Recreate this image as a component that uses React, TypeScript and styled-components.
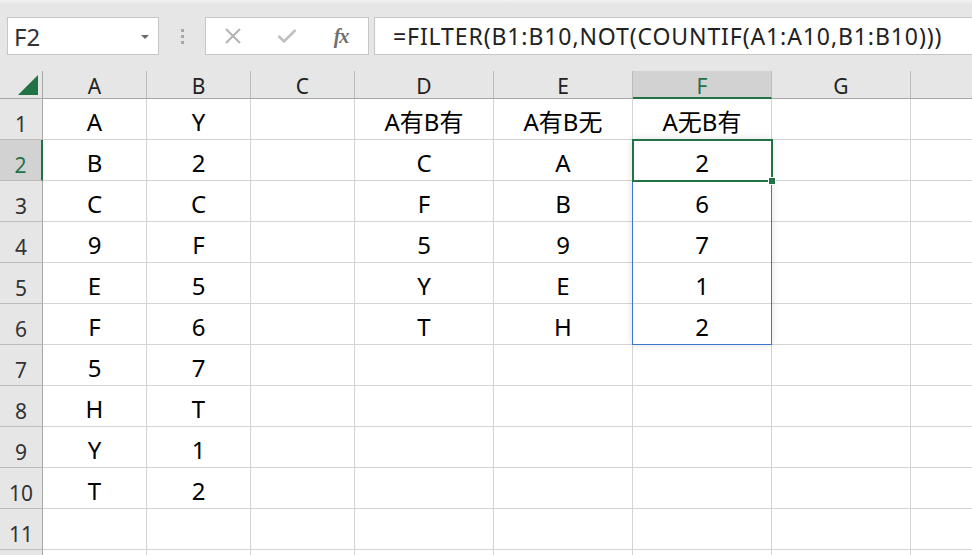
import styled, { createGlobalStyle } from "styled-components";
import { Fragment } from "react";

const GlobalStyle = createGlobalStyle`
  body {
    margin: 0;
    background: #ffffff;
    font-family: "Noto Sans", "Noto Sans CJK SC", sans-serif;
  }
`;

interface ColDef {
  key: string;
  width: number;
}

const COLS: ColDef[] = [
  { key: "A", width: 104 },
  { key: "B", width: 104 },
  { key: "C", width: 104 },
  { key: "D", width: 139 },
  { key: "E", width: 139 },
  { key: "F", width: 139 },
  { key: "G", width: 139 },
  { key: "H", width: 139 },
];

const DATA: string[][] = [
  ["A", "Y", "", "A有B有", "A有B无", "A无B有"],
  ["B", "2", "", "C", "A", "2"],
  ["C", "C", "", "F", "B", "6"],
  ["9", "F", "", "5", "9", "7"],
  ["E", "5", "", "Y", "E", "1"],
  ["F", "6", "", "T", "H", "2"],
  ["5", "7"],
  ["H", "T"],
  ["Y", "1"],
  ["T", "2"],
  [],
  [],
];

const ROW_H = 41;
const HEAD_H = 28;
const ROWHEAD_W = 43;
const F_LEFT = ROWHEAD_W + 104 * 3 + 139 * 2;

const Page = styled.div`
  width: 972px;
  height: 555px;
  overflow: hidden;
  background: #e6e6e6;
  display: flex;
  flex-direction: column;
`;

const Toolbar = styled.div`
  flex-shrink: 0;
  height: 71px;
  box-sizing: border-box;
  padding: 17px 0 16px 7px;
  display: flex;
  align-items: stretch;
  background: linear-gradient(#f3f3f3 0px, #e6e6e6 4px);
`;

const FieldBox = styled.div<{ $w: number }>`
  width: ${(p) => p.$w}px;
  box-sizing: border-box;
  background: #ffffff;
  border: 1px solid #c6c6c6;
  display: flex;
  align-items: center;
  position: relative;
`;

const NameText = styled.span`
  font-family: "Noto Sans", sans-serif;
  font-size: 24px;
  color: #333333;
  padding-left: 6px;
`;

const DropArrow = styled.div`
  position: absolute;
  right: 9px;
  top: 17px;
  width: 0;
  height: 0;
  border-left: 4px solid transparent;
  border-right: 4px solid transparent;
  border-top: 4px solid #6a6a6a;
`;

const Grip = styled.div`
  width: 46px;
  display: flex;
  flex-direction: column;
  align-items: center;
  justify-content: center;
  gap: 3px;
`;

const GripDot = styled.span`
  width: 3px;
  height: 3px;
  background: #a8a8a8;
`;

const IconCell = styled.div`
  flex: 1;
  display: flex;
  align-items: center;
  justify-content: center;
`;

const FxText = styled.span`
  font-family: "Liberation Serif", serif;
  font-style: italic;
  font-weight: bold;
  font-size: 20px;
  color: #6f6f6f;
  letter-spacing: -1px;
`;

const FormulaBox = styled.div`
  flex: 1;
  margin-left: 5px;
  box-sizing: border-box;
  background: #ffffff;
  border: 1px solid #c6c6c6;
  border-right: none;
  display: flex;
  align-items: center;
  padding-left: 18px;
`;

const FormulaText = styled.span`
  font-family: "Noto Sans", sans-serif;
  font-size: 23px;
  letter-spacing: 0.9px;
  color: #222222;
  white-space: nowrap;
`;

const Sheet = styled.div`
  position: relative;
  flex: 1;
  min-height: 0;
  overflow: hidden;
  background: #ffffff;
  display: grid;
  grid-template-columns: ${ROWHEAD_W}px ${COLS.map((c) => `${c.width}px`).join(" ")};
  grid-template-rows: ${HEAD_H}px;
  grid-auto-rows: ${ROW_H}px;
  align-content: start;
`;

const Corner = styled.div`
  background: #e6e6e6;
  box-sizing: border-box;
  border-right: 1px solid #a6a6a6;
  border-bottom: 1px solid #a6a6a6;
  position: relative;
`;

const CornerTriangle = styled.div`
  position: absolute;
  right: 4px;
  bottom: 3px;
  width: 0;
  height: 0;
  border-left: 20px solid transparent;
  border-bottom: 20px solid #217346;
`;

const ColHead = styled.div<{ $active?: boolean }>`
  box-sizing: border-box;
  background: ${(p) => (p.$active ? "#d2d2d2" : "#e6e6e6")};
  border-right: 1px solid #bcbcbc;
  border-bottom: ${(p) => (p.$active ? "2px solid #217346" : "1px solid #a6a6a6")};
  display: flex;
  align-items: center;
  justify-content: center;
  font-size: 21px;
  color: ${(p) => (p.$active ? "#217346" : "#222222")};
  padding-top: ${(p) => (p.$active ? "3px" : "2px")};
`;

const RowHead = styled.div<{ $active?: boolean }>`
  box-sizing: border-box;
  background: ${(p) => (p.$active ? "#d2d2d2" : "#e6e6e6")};
  border-right: ${(p) => (p.$active ? "2px solid #217346" : "1px solid #a6a6a6")};
  border-bottom: 1px solid #bcbcbc;
  display: flex;
  align-items: flex-end;
  justify-content: center;
  padding-bottom: 1px;
  font-size: 21px;
  color: ${(p) => (p.$active ? "#217346" : "#333333")};
`;

const Cell = styled.div`
  box-sizing: border-box;
  border-right: 1px solid #d4d4d4;
  border-bottom: 1px solid #d4d4d4;
  display: flex;
  align-items: flex-end;
  justify-content: center;
  font-size: 24px;
  line-height: 32px;
  padding-bottom: 1px;
  color: #000000;
  white-space: nowrap;
  overflow: hidden;
`;

const SpillRange = styled.div`
  position: absolute;
  left: ${F_LEFT - 1}px;
  top: ${HEAD_H + ROW_H - 1}px;
  width: 140px;
  height: ${ROW_H * 5 + 1}px;
  box-sizing: border-box;
  border: 1px solid #3e74c9;
  box-shadow: 0 0 8px rgba(0, 0, 0, 0.12);
  pointer-events: none;
`;

const ActiveCell = styled.div`
  position: absolute;
  left: ${F_LEFT - 1}px;
  top: ${HEAD_H + ROW_H - 1}px;
  width: 141px;
  height: ${ROW_H + 2}px;
  box-sizing: border-box;
  border: 2px solid #217346;
  pointer-events: none;
`;

const FillHandle = styled.div`
  position: absolute;
  right: -5px;
  bottom: -5px;
  width: 6px;
  height: 6px;
  background: #217346;
  border: 1px solid #ffffff;
`;

export default function App() {
  return (
    <Page>
      <GlobalStyle />
      <Toolbar>
        <FieldBox $w={152}>
          <NameText>F2</NameText>
          <DropArrow />
        </FieldBox>
        <Grip>
          <GripDot />
          <GripDot />
          <GripDot />
        </Grip>
        <FieldBox $w={164}>
          <IconCell>
            <svg width="18" height="18" viewBox="0 0 18 18">
              <path d="M2 2 L16 16 M16 2 L2 16" stroke="#b3b3b3" strokeWidth="2" fill="none" />
            </svg>
          </IconCell>
          <IconCell>
            <svg width="20" height="16" viewBox="0 0 20 16">
              <path d="M1.5 8 L7 13.5 L18.5 2" stroke="#c0c0c0" strokeWidth="2.6" fill="none" />
            </svg>
          </IconCell>
          <IconCell>
            <FxText>fx</FxText>
          </IconCell>
        </FieldBox>
        <FormulaBox>
          <FormulaText>=FILTER(B1:B10,NOT(COUNTIF(A1:A10,B1:B10)))</FormulaText>
        </FormulaBox>
      </Toolbar>
      <Sheet>
        <Corner>
          <CornerTriangle />
        </Corner>
        {COLS.map((c) => (
          <ColHead key={c.key} $active={c.key === "F"}>
            {c.key}
          </ColHead>
        ))}
        {DATA.map((row, r) => (
          <Fragment key={r}>
            <RowHead $active={r === 1}>{r + 1}</RowHead>
            {COLS.map((c, ci) => (
              <Cell key={c.key}>{row[ci] ?? ""}</Cell>
            ))}
          </Fragment>
        ))}
        <SpillRange />
        <ActiveCell>
          <FillHandle />
        </ActiveCell>
      </Sheet>
    </Page>
  );
}
